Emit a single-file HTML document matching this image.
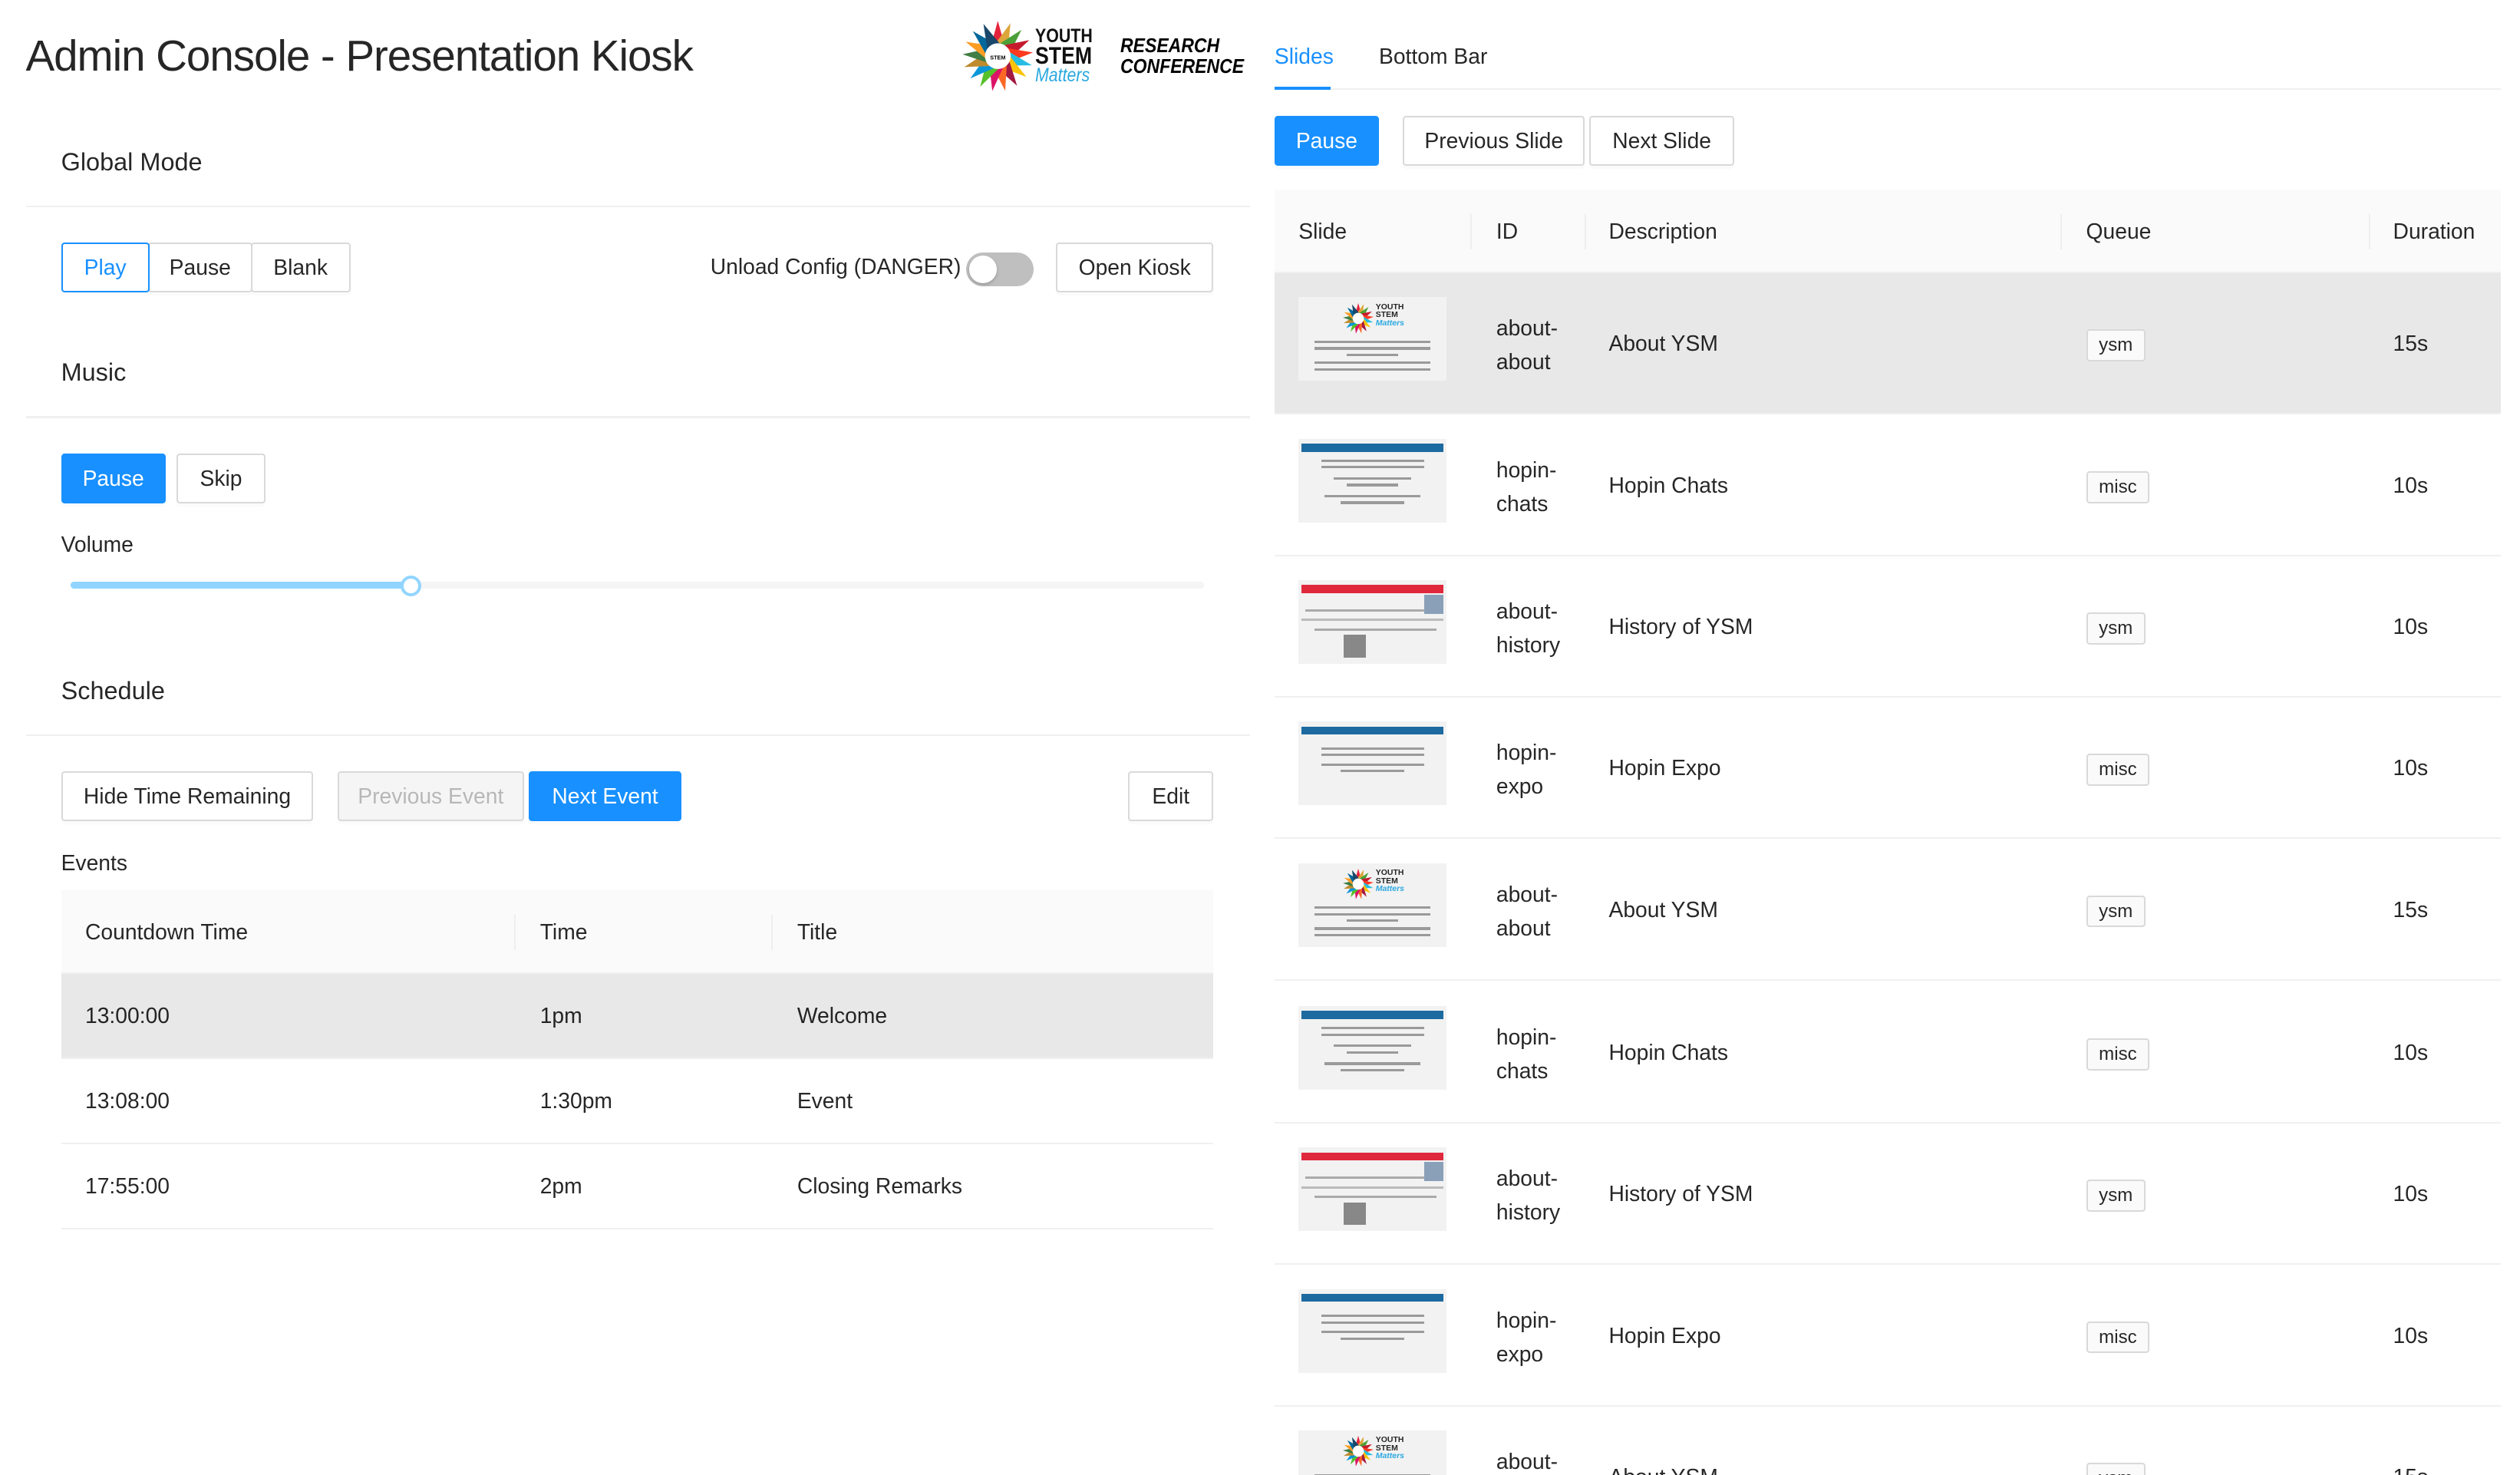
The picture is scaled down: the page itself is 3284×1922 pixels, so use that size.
<!DOCTYPE html>
<html><head><meta charset="utf-8">
<style>
*{box-sizing:border-box;margin:0;padding:0}
html,body{width:3284px;height:1922px;overflow:hidden;background:#fff}
#w{zoom:2.0944;width:1568px;height:918px;position:relative;font-family:"Liberation Sans",sans-serif;font-size:13.5px;color:rgba(0,0,0,.85)}
.a{position:absolute}
.btn{position:absolute;height:31px;border:1px solid #d9d9d9;background:#fff;border-radius:2px;display:flex;align-items:center;justify-content:center;font-size:13.5px;color:rgba(0,0,0,.85);box-shadow:0 2px 0 rgba(0,0,0,.015)}
.pri{background:#1890ff;border-color:#1890ff;color:#fff}
.h{position:absolute;font-size:15.5px;left:38px}
.hr{position:absolute;left:16px;width:762px;height:1px;background:#f0f0f0}
.tr{position:absolute;left:38px;width:717px;height:53px;border-bottom:1px solid #f0f0f0}
.tr span{position:absolute;top:18px}
.sr{position:absolute;left:793px;width:763px;height:88px;border-bottom:1px solid #f0f0f0}
.sr .id{position:absolute;left:138px;top:24px;line-height:21px}
.sr .ds{position:absolute;left:208px;top:36px}
.sr .tg{position:absolute;left:505px;top:35px;height:20px;padding:0 7px;border:1px solid #d9d9d9;background:#fafafa;border-radius:2px;font-size:11.5px;line-height:18px}
.sr .du{position:absolute;left:696px;top:36px}
.th{position:absolute;left:15px;top:15px;width:92px;height:52px;background:#f2f2f2;overflow:hidden}
.bar{position:absolute;left:2px;top:3px;width:88px;height:5px}
.ln{position:absolute;height:1.5px;background:#9a9a9a}
</style></head><body>
<svg width="0" height="0" style="position:absolute">
<defs>
<g id="burst">
<polygon points="-5,-4 5,-4 0,-22" fill="#e5243b"/>
<polygon points="-5,-4 5,-4 0,-22" fill="#dda63a" transform="rotate(21)"/>
<polygon points="-5,-4 5,-4 0,-22" fill="#4c9f38" transform="rotate(42)"/>
<polygon points="-5,-4 5,-4 0,-22" fill="#c5192d" transform="rotate(63)"/>
<polygon points="-5,-4 5,-4 0,-22" fill="#ff3a21" transform="rotate(84)"/>
<polygon points="-5,-4 5,-4 0,-22" fill="#26bde2" transform="rotate(105)"/>
<polygon points="-5,-4 5,-4 0,-22" fill="#fcc30b" transform="rotate(126)"/>
<polygon points="-5,-4 5,-4 0,-22" fill="#a21942" transform="rotate(147)"/>
<polygon points="-5,-4 5,-4 0,-22" fill="#fd6925" transform="rotate(168)"/>
<polygon points="-5,-4 5,-4 0,-22" fill="#dd1367" transform="rotate(189)"/>
<polygon points="-5,-4 5,-4 0,-22" fill="#56c02b" transform="rotate(210)"/>
<polygon points="-5,-4 5,-4 0,-22" fill="#0a97d9" transform="rotate(231)"/>
<polygon points="-5,-4 5,-4 0,-22" fill="#bf8b2e" transform="rotate(252)"/>
<polygon points="-5,-4 5,-4 0,-22" fill="#3f7e44" transform="rotate(273)"/>
<polygon points="-5,-4 5,-4 0,-22" fill="#fd9d24" transform="rotate(294)"/>
<polygon points="-5,-4 5,-4 0,-22" fill="#00689d" transform="rotate(315)"/>
<polygon points="-5,-4 5,-4 0,-22" fill="#19486a" transform="rotate(336)"/>
<circle r="8" fill="#fff"/>
</g>
</defs></svg>
<div id="w">
<div class="a" style="left:16px;top:19px;font-size:27px;letter-spacing:-0.5px;color:rgba(0,0,0,.85)">Admin Console - Presentation Kiosk</div>
<svg class="a" style="left:596px;top:12px" width="50" height="46" viewBox="-25 -23 50 46"><use href="#burst"/><text x="0" y="2" font-size="3.5" text-anchor="middle" font-family="Liberation Sans" font-weight="bold">STEM</text></svg>
<div class="a" style="left:644px;top:17px;font-size:12px;line-height:11px;font-weight:bold;color:#111;transform:scaleX(.85);transform-origin:left">YOUTH<br><span style="font-size:15px;line-height:13px">STEM</span><br><i style="color:#2aa8e0;font-weight:normal;font-size:12px">Matters</i></div>
<div class="a" style="left:697px;top:22px;font-size:12.5px;line-height:13px;font-weight:bold;font-style:italic;color:#000;transform:scaleX(.88);transform-origin:left">RESEARCH<br>CONFERENCE</div>

<div class="h" style="top:92px">Global Mode</div>
<div class="hr" style="top:128px"></div>
<div class="btn" style="left:38px;top:151px;width:55px;border-color:#1890ff;color:#1890ff;z-index:2">Play</div>
<div class="btn" style="left:92px;top:151px;width:65px">Pause</div>
<div class="btn" style="left:156px;top:151px;width:62px">Blank</div>
<div class="a" style="right:970px;top:158px;white-space:nowrap">Unload Config (DANGER)</div>
<div class="a" style="left:601px;top:157px;width:42px;height:21px;border-radius:11px;background:#bfbfbf"><div class="a" style="left:2px;top:2px;width:17px;height:17px;border-radius:50%;background:#fff;box-shadow:0 1px 2px rgba(0,0,0,.2)"></div></div>
<div class="btn" style="left:657px;top:151px;width:98px">Open Kiosk</div>

<div class="h" style="top:223px">Music</div>
<div class="hr" style="top:259px"></div>
<div class="btn pri" style="left:38px;top:282px;width:65px">Pause</div>
<div class="btn" style="left:110px;top:282px;width:55px">Skip</div>
<div class="a" style="left:38px;top:331px">Volume</div>
<div class="a" style="left:44px;top:362px;width:705px;height:4px;border-radius:2px;background:#f5f5f5"></div>
<div class="a" style="left:44px;top:362px;width:211px;height:4px;border-radius:2px;background:#91d5ff"></div>
<div class="a" style="left:249px;top:358px;width:13px;height:13px;border-radius:50%;background:#fff;border:2px solid #91d5ff"></div>

<div class="h" style="top:421px">Schedule</div>
<div class="hr" style="top:457px"></div>
<div class="btn" style="left:38px;top:480px;width:157px">Hide Time Remaining</div>
<div class="btn" style="left:210px;top:480px;width:116px;background:#f5f5f5;color:rgba(0,0,0,.25)">Previous Event</div>
<div class="btn pri" style="left:329px;top:480px;width:95px">Next Event</div>
<div class="btn" style="left:702px;top:480px;width:53px">Edit</div>
<div class="a" style="left:38px;top:529px">Events</div>

<div class="tr" style="top:554px;background:#fafafa;height:52px"><span style="left:15px">Countdown Time</span><span style="left:298px">Time</span><span style="left:458px">Title</span>
<div class="a" style="left:282px;top:15px;width:1px;height:22px;background:#eee"></div><div class="a" style="left:442px;top:15px;width:1px;height:22px;background:#eee"></div></div>
<div class="tr" style="top:606px;background:#e8e8e8"><span style="left:15px">13:00:00</span><span style="left:298px">1pm</span><span style="left:458px">Welcome</span></div>
<div class="tr" style="top:659px"><span style="left:15px">13:08:00</span><span style="left:298px">1:30pm</span><span style="left:458px">Event</span></div>
<div class="tr" style="top:712px"><span style="left:15px">17:55:00</span><span style="left:298px">2pm</span><span style="left:458px">Closing Remarks</span></div>

<div class="a" style="left:793px;top:27px;color:#1890ff">Slides</div>
<div class="a" style="left:858px;top:27px">Bottom Bar</div>
<div class="a" style="left:793px;top:55px;width:763px;height:1px;background:#f0f0f0"></div>
<div class="a" style="left:793px;top:54px;width:35px;height:2px;background:#1890ff"></div>
<div class="btn pri" style="left:793px;top:72px;width:65px">Pause</div>
<div class="btn" style="left:873px;top:72px;width:113px">Previous Slide</div>
<div class="btn" style="left:989px;top:72px;width:90px">Next Slide</div>

<div class="a" style="left:793px;top:118px;width:763px;height:52px;background:#fafafa;border-bottom:1px solid #f0f0f0">
<span class="a" style="left:15px;top:18px">Slide</span><span class="a" style="left:138px;top:18px">ID</span><span class="a" style="left:208px;top:18px">Description</span><span class="a" style="left:505px;top:18px">Queue</span><span class="a" style="left:696px;top:18px">Duration</span>
<div class="a" style="left:122px;top:15px;width:1px;height:22px;background:#eee"></div><div class="a" style="left:193px;top:15px;width:1px;height:22px;background:#eee"></div><div class="a" style="left:489px;top:15px;width:1px;height:22px;background:#eee"></div><div class="a" style="left:681px;top:15px;width:1px;height:22px;background:#eee"></div></div>

<div class="sr" style="top:170px;background:#e8e8e8"><div class="th"><svg class="a" style="left:26px;top:3px" width="22" height="20" viewBox="-25 -23 50 46"><use href="#burst"/></svg><div class="a" style="left:48px;top:4px;font-size:5px;line-height:5px;font-weight:bold">YOUTH<br>STEM<br><i style="color:#2aa8e0">Matters</i></div><div class="ln" style="left:10px;top:27px;width:72px"></div><div class="ln" style="left:10px;top:31px;width:72px"></div><div class="ln" style="left:30px;top:35px;width:32px"></div><div class="ln" style="left:10px;top:40px;width:72px"></div><div class="ln" style="left:10px;top:44px;width:72px"></div></div><div class="id">about-<br>about</div><div class="ds">About YSM</div><div class="tg">ysm</div><div class="du">15s</div></div>

<div class="sr" style="top:258px"><div class="th"><div class="bar" style="background:#1d6aa0"></div><div class="ln" style="left:14px;top:13px;width:64px"></div><div class="ln" style="left:14px;top:17px;width:64px"></div><div class="ln" style="left:22px;top:24px;width:48px"></div><div class="ln" style="left:30px;top:28px;width:32px"></div><div class="ln" style="left:16px;top:35px;width:60px"></div><div class="ln" style="left:26px;top:39px;width:40px"></div></div><div class="id">hopin-<br>chats</div><div class="ds">Hopin Chats</div><div class="tg">misc</div><div class="du">10s</div></div>

<div class="sr" style="top:346px"><div class="th"><div class="bar" style="background:#e0283c"></div><div class="ln" style="left:2px;top:24px;width:88px;background:#bbb"></div><div class="ln" style="left:4px;top:18px;width:80px;background:#aaa"></div><div class="ln" style="left:10px;top:30px;width:76px;background:#aaa"></div><div class="a" style="left:78px;top:9px;width:12px;height:12px;background:#8aa0b8"></div><div class="a" style="left:28px;top:34px;width:14px;height:14px;background:#888"></div></div><div class="id">about-<br>history</div><div class="ds">History of YSM</div><div class="tg">ysm</div><div class="du">10s</div></div>

<div class="sr" style="top:434px"><div class="th"><div class="bar" style="background:#1d6aa0"></div><div class="ln" style="left:14px;top:16px;width:64px"></div><div class="ln" style="left:14px;top:20px;width:64px"></div><div class="ln" style="left:14px;top:26px;width:64px"></div><div class="ln" style="left:26px;top:30px;width:40px"></div></div><div class="id">hopin-<br>expo</div><div class="ds">Hopin Expo</div><div class="tg">misc</div><div class="du">10s</div></div>

<div class="sr" style="top:522px"><div class="th"><svg class="a" style="left:26px;top:3px" width="22" height="20" viewBox="-25 -23 50 46"><use href="#burst"/></svg><div class="a" style="left:48px;top:4px;font-size:5px;line-height:5px;font-weight:bold">YOUTH<br>STEM<br><i style="color:#2aa8e0">Matters</i></div><div class="ln" style="left:10px;top:27px;width:72px"></div><div class="ln" style="left:10px;top:31px;width:72px"></div><div class="ln" style="left:30px;top:35px;width:32px"></div><div class="ln" style="left:10px;top:40px;width:72px"></div><div class="ln" style="left:10px;top:44px;width:72px"></div></div><div class="id">about-<br>about</div><div class="ds">About YSM</div><div class="tg">ysm</div><div class="du">15s</div></div>

<div class="sr" style="top:611px"><div class="th"><div class="bar" style="background:#1d6aa0"></div><div class="ln" style="left:14px;top:13px;width:64px"></div><div class="ln" style="left:14px;top:17px;width:64px"></div><div class="ln" style="left:22px;top:24px;width:48px"></div><div class="ln" style="left:30px;top:28px;width:32px"></div><div class="ln" style="left:16px;top:35px;width:60px"></div><div class="ln" style="left:26px;top:39px;width:40px"></div></div><div class="id">hopin-<br>chats</div><div class="ds">Hopin Chats</div><div class="tg">misc</div><div class="du">10s</div></div>

<div class="sr" style="top:699px"><div class="th"><div class="bar" style="background:#e0283c"></div><div class="ln" style="left:2px;top:24px;width:88px;background:#bbb"></div><div class="ln" style="left:4px;top:18px;width:80px;background:#aaa"></div><div class="ln" style="left:10px;top:30px;width:76px;background:#aaa"></div><div class="a" style="left:78px;top:9px;width:12px;height:12px;background:#8aa0b8"></div><div class="a" style="left:28px;top:34px;width:14px;height:14px;background:#888"></div></div><div class="id">about-<br>history</div><div class="ds">History of YSM</div><div class="tg">ysm</div><div class="du">10s</div></div>

<div class="sr" style="top:787px"><div class="th"><div class="bar" style="background:#1d6aa0"></div><div class="ln" style="left:14px;top:16px;width:64px"></div><div class="ln" style="left:14px;top:20px;width:64px"></div><div class="ln" style="left:14px;top:26px;width:64px"></div><div class="ln" style="left:26px;top:30px;width:40px"></div></div><div class="id">hopin-<br>expo</div><div class="ds">Hopin Expo</div><div class="tg">misc</div><div class="du">10s</div></div>

<div class="sr" style="top:875px"><div class="th"><svg class="a" style="left:26px;top:3px" width="22" height="20" viewBox="-25 -23 50 46"><use href="#burst"/></svg><div class="a" style="left:48px;top:4px;font-size:5px;line-height:5px;font-weight:bold">YOUTH<br>STEM<br><i style="color:#2aa8e0">Matters</i></div><div class="ln" style="left:10px;top:27px;width:72px"></div><div class="ln" style="left:10px;top:31px;width:72px"></div></div><div class="id">about-<br>about</div><div class="ds">About YSM</div><div class="tg">ysm</div><div class="du">15s</div></div>
</div>
</body></html>
